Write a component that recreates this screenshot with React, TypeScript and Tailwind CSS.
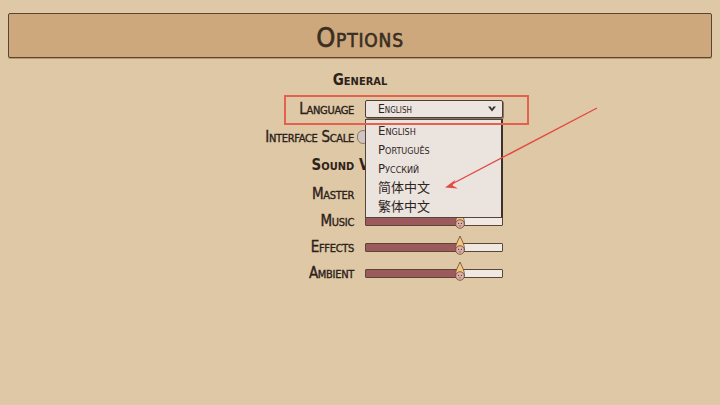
const sc = "[font-variant:small-caps]";

function Thumb({ className = "", left }: { className?: string; left: string }) {
  // little flame-topped drop used as slider knob
  return (
    <svg width="12" height="21" viewBox="0 0 12 21" className={className} style={{ left }}>
      <path d="M6 1 C7.5 5 10.5 9 10.5 14 A4.5 4.5 0 0 1 1.5 14 C1.5 9 4.5 5 6 1Z" fill="#f2c77e" stroke="#6b4a35" strokeWidth="0.8" />
      <circle cx="6" cy="15" r="4.3" fill="#dfb1a8" stroke="#6b4a35" strokeWidth="0.8" />
      <circle cx="4.6" cy="14.4" r="0.6" fill="#5a3a30" />
      <circle cx="7.4" cy="14.4" r="0.6" fill="#5a3a30" />
      <path d="M4.8 16.6 Q6 17.6 7.2 16.6" fill="none" stroke="#5a3a30" strokeWidth="0.6" />
    </svg>
  );
}

function Slider({ value }: { value: number }) {
  return (
    <div className="relative w-[138px] h-[9px] border border-[#5b4636] bg-[#efe8e3] rounded-[1px]">
      <div className="h-full bg-[#9c5a5d]" style={{ width: `${value}%` }} />
      <Thumb className="absolute -top-[9px] -translate-x-1/2" left={`${value}%`} />
    </div>
  );
}

function Row({ label, h, children }: { label: string; h: string; children: React.ReactNode }) {
  return (
    <div className={`grid grid-cols-[354px_138px_1fr] gap-x-[11px] items-center ${h}`}>
      <span className={`text-right text-[15px] leading-none text-[#2c2219] [-webkit-text-stroke:0.35px_#2c2219] ${sc} tracking-[-0.02em]`}>{label}</span>
      <div className="flex items-center">{children}</div>
    </div>
  );
}

export default function App() {
  const languages = ["English", "Português", "Русский", "简体中文", "繁体中文"];

  return (
    <div className="relative w-[720px] h-[405px] overflow-hidden bg-[#dfc8a6] font-['DejaVu_Sans_Condensed','Noto_Sans_CJK_SC',sans-serif] text-[#2c2219]">
      {/* title bar */}
      <div className="mx-[8px] mt-[13px] h-[45px] pt-[3px] rounded-[2px] border border-[#5a4634] bg-[#cca87c] shadow-[0_1px_0_#b89870] flex items-center justify-center">
        <h1 className={`text-[27px] leading-none tracking-[0.03em] text-[#3a2e24] [-webkit-text-stroke:0.6px_#3a2e24] ${sc}`}>Options</h1>
      </div>

      <div className="mt-[14px] h-[16px] flex items-center justify-center">
        <h2 className={`text-[15px] font-bold leading-none ${sc}`}>General</h2>
      </div>

      <div className="mt-[7px]">
        <Row label="Language" h="h-[28px]">
          <div className="w-[138px] h-[18px] border border-[#4e3d30] rounded-[2px] bg-[#ece4df] shadow-[1px_1px_0_#8a7565] flex items-center justify-between pl-[12px] pr-[5px]">
            <span className={`text-[12px] leading-none ${sc}`}>English</span>
            <svg width="10" height="8" viewBox="0 0 10 8">
              <path d="M1 1.5 L5 6.5 L9 1.5 L6.5 1.5 L5 3.8 L3.5 1.5Z" fill="#3a2e26" />
            </svg>
          </div>
        </Row>
        <Row label="Interface Scale" h="h-[28px]">
          <div className="relative w-[138px] h-[9px]">
            <div className="absolute -left-[8px] -top-[3px] w-[12px] h-[14px] rounded-full bg-[#cfc6c0] border border-[#8a7a70]" />
          </div>
        </Row>
        <div className="h-[29px] flex items-center justify-center">
          <h2 className={`text-[15px] font-bold leading-none ${sc}`}>Sound Volume</h2>
        </div>
        <Row label="Master" h="h-[28px]">
          <Slider value={69} />
        </Row>
        <Row label="Music" h="h-[26px]">
          <Slider value={69} />
        </Row>
        <Row label="Effects" h="h-[26px]">
          <Slider value={69} />
        </Row>
        <Row label="Ambient" h="h-[26px]">
          <Slider value={69} />
        </Row>
      </div>

      {/* open language list */}
      <ul className="absolute left-[365px] top-[119px] w-[138px] h-[99px] pt-[1px] bg-[#ebe3de] border border-[#54443a] border-r-2 border-r-[#3e3129] z-10">
        {languages.map((l) => (
          <li key={l} className={`h-[19px] pl-[12px] flex items-center text-[13px] leading-none text-[#2e241d] ${sc}`}>
            {l}
          </li>
        ))}
      </ul>

      {/* annotation box and arrow */}
      <div className="absolute left-[284px] top-[95px] w-[245px] h-[30px] border-2 border-[#e4604f] z-20 pointer-events-none" />
      <svg className="absolute left-0 top-0 z-20 pointer-events-none" width="720" height="405">
        <line x1="597" y1="108" x2="450" y2="185" stroke="#e24a43" strokeWidth="1.4" />
        <path d="M445 187.5 L455.5 179.8 L452.5 185.5 L458 188.5Z" fill="#e24a43" />
      </svg>
    </div>
  );
}
